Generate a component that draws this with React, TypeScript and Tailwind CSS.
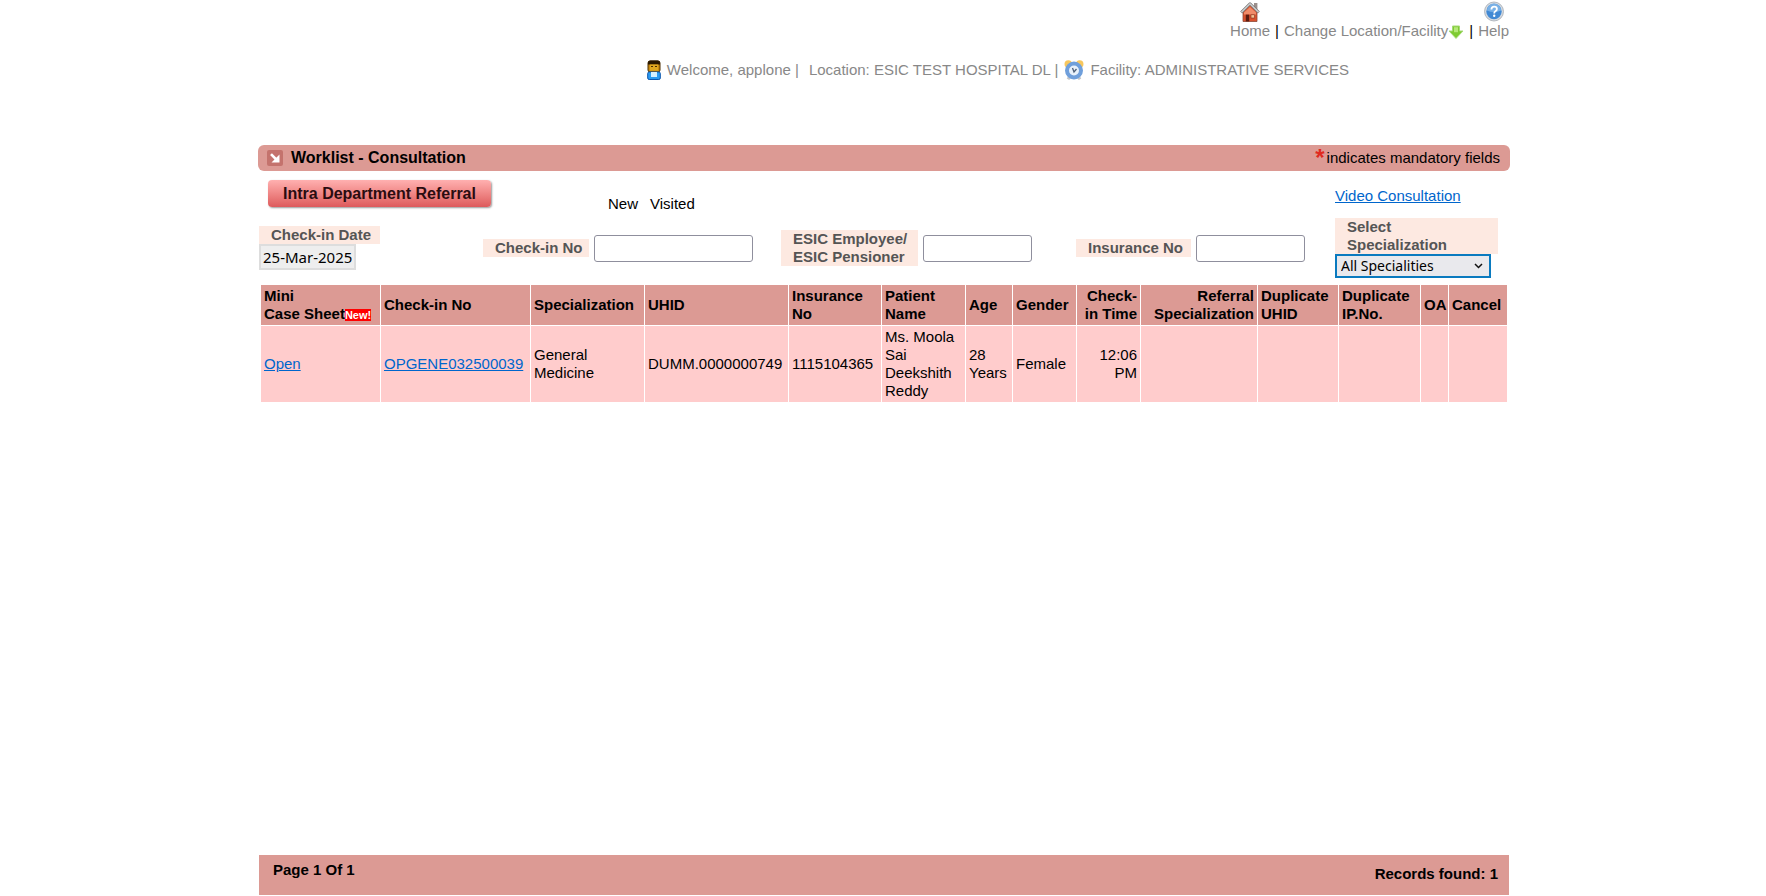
import React from "react";

const SANS = "font-['Liberation_Sans',Arial,sans-serif]";

function HomeIcon() {
  return (
    <svg width="20" height="20" viewBox="0 0 20 20" aria-hidden="true">
      <rect x="14" y="1" width="3.4" height="7" fill="#9a8f8c" />
      <path d="M3 9.500 10 3l7 6.500V19.500H3z" fill="#d9512c" stroke="#8d4a38" strokeWidth="0.8" />
      <path d="M4 10.500 10 5l6 5.500v2H4z" fill="#f08b68" />
      <rect x="5.800" y="12.600" width="3.400" height="6.800" fill="#5a1c10" />
      <rect x="11" y="12.800" width="3.600" height="3.200" fill="#f7c090" stroke="#7d3020" strokeWidth="0.600" />
      <path d="M1.200 10.600 10 1.800l8.800 8.800" fill="none" stroke="#777" strokeWidth="2.800" strokeLinejoin="round" />
      <path d="M1.400 10.200 10 1.800l8.600 8.400" fill="none" stroke="#cfcfcf" strokeWidth="1.400" strokeLinejoin="round" />
    </svg>
  );
}

function HelpIcon() {
  return (
    <svg width="20" height="21" viewBox="0 0 20 21" aria-hidden="true">
      <circle cx="10" cy="10.500" r="9.500" fill="#d5dae0" stroke="#a4abb4" strokeWidth="0.800" />
      <circle cx="10" cy="10.500" r="7.700" fill="#4189d4" />
      <path d="M3 9.500a7 7 0 0 1 14 0q-7 3-14 0z" fill="#78b0e6" />
      <path d="M7.400 8.500q.1-2.800 2.800-2.800t2.700 2.300q0 1.400-1.500 2.300-1.200.8-1.200 2.100" fill="none" stroke="#fff" strokeWidth="1.800" />
      <circle cx="10.200" cy="14.800" r="1.200" fill="#fff" />
    </svg>
  );
}

function DownArrowIcon() {
  return (
    <svg className="mt-0.5" width="16" height="14" viewBox="0 0 16 14" aria-hidden="true">
      <path d="M4.500 1h7v5H15l-7 7.400L1 6h3.500z" fill="#7fcb32" stroke="#a6d978" strokeWidth="1" strokeLinejoin="round" />
      <path d="M6 2.200h4v5H6z" fill="#b5e878" />
    </svg>
  );
}

function UserIcon() {
  return (
    <svg width="14" height="20" viewBox="0 0 14 20" aria-hidden="true">
      <rect x="1" y="1" width="12" height="11" rx="2" fill="#c98a10" stroke="#4a2d00" strokeWidth="1" />
      <path d="M1 4.500V2.500Q1 .5 3.500.5h7Q13 .5 13 2.500v2z" fill="#2a1800" />
      <rect x="3" y="4.500" width="8" height="6" fill="#e0a820" />
      <path d="M4 6.500h2M8 6.500h2" stroke="#4a2d00" strokeWidth="1" />
      <rect x="0.700" y="12" width="12.600" height="7.500" rx="1.500" fill="#2b9bf0" stroke="#0c56ad" strokeWidth="1" />
      <path d="M4 12h6v5H4z" fill="#d4efff" />
    </svg>
  );
}

function ClockIcon() {
  return (
    <svg width="20" height="20" viewBox="0 0 20 20" aria-hidden="true">
      <path d="M4 19.300 6 16M16 19.300 14 16" stroke="#c3c6ca" strokeWidth="3" />
      <circle cx="4.300" cy="4" r="3.800" fill="#f7c75e" />
      <circle cx="15.700" cy="4" r="3.800" fill="#f7c75e" />
      <circle cx="10" cy="10.500" r="7" fill="#e8f1fb" stroke="#6f9fdb" strokeWidth="4" />
      <path d="M8.500 8l1.500 4L12.500 9" fill="none" stroke="#4d5f78" strokeWidth="1.300" />
    </svg>
  );
}

function PanelIcon() {
  return (
    <svg width="16" height="16" viewBox="0 0 16 16" aria-hidden="true">
      <rect width="16" height="16" rx="2" fill="#c4736d" />
      <path d="M4 4.200 10.300 10.500" stroke="#fff" strokeWidth="2.600" />
      <path d="M12.500 4.500v8H4.500z" fill="#fff" />
    </svg>
  );
}

const LABEL = "bg-[#fde9e1] pl-3 font-bold leading-[18px] text-[#555]";
const FIELD = "rounded-[3px] border border-[#8f8f9d] bg-white px-1";

type Column = { title: React.ReactNode; width: string; value: React.ReactNode; right?: boolean };

const columns: Column[] = [
  {
    title: (
      <>
        Mini
        <br />
        Case Sheet
        <span className="bg-[#ff0000] text-[11px] leading-3 text-white">New!</span>
      </>
    ),
    width: "w-[119px]",
    value: <a href="#open" className="text-[#0066cc] underline">Open</a>,
  },
  {
    title: "Check-in No",
    width: "w-[149px]",
    value: <a href="#checkin" className="text-[#0066cc] underline">OPGENE032500039</a>,
  },
  { title: "Specialization", width: "w-[113px]", value: <>General<br />Medicine</> },
  { title: "UHID", width: "w-[143px]", value: "DUMM.0000000749" },
  { title: <>Insurance<br />No</>, width: "w-[92px]", value: "1115104365" },
  { title: <>Patient<br />Name</>, width: "w-[83px]", value: <>Ms. Moola<br />Sai<br />Deekshith<br />Reddy</> },
  { title: "Age", width: "w-[46px]", value: <>28<br />Years</> },
  { title: "Gender", width: "w-[63px]", value: "Female" },
  { title: <>Check-<br />in Time</>, width: "w-[63px]", value: <>12:06<br />PM</>, right: true },
  { title: <>Referral<br />Specialization</>, width: "w-[116px]", value: "", right: true },
  { title: <>Duplicate<br />UHID</>, width: "w-[80px]", value: "" },
  { title: <>Duplicate<br />IP.No.</>, width: "w-[81px]", value: "" },
  { title: "OA", width: "w-[27px]", value: "" },
  { title: "Cancel", width: "w-[58px]", value: "" },
];

export default function App() {
  return (
    <div className={`${SANS} mx-auto flex min-h-screen w-full max-w-[1254px] flex-col bg-white pb-px pl-0.5 text-[15px] leading-[18px] text-black`}>
      <header className="text-[#888]">
        <nav className="flex items-end justify-end gap-[5px] pt-px pr-px">
          <a href="#home" className="flex flex-col items-center">
            <HomeIcon />
            Home
          </a>
          <span className="text-black">|</span>
          <a href="#location" className="flex items-center">
            Change Location/Facility
            <DownArrowIcon />
          </a>
          <span className="text-black">|</span>
          <a href="#help" className="flex flex-col items-center">
            <HelpIcon />
            Help
          </a>
        </nav>
        <div className="flex items-center justify-center gap-1.5 pt-5 pl-[228px]">
          <UserIcon />
          <span>Welcome, applone |</span>
          <span className="pl-1">Location: ESIC TEST HOSPITAL DL |</span>
          <ClockIcon />
          <span>Facility: ADMINISTRATIVE SERVICES</span>
        </div>
      </header>

      <main>
        <div className="mt-[65px] flex h-[26px] items-center rounded-md bg-[#dc9a94] pr-[10px] pl-[9px]">
          <PanelIcon />
          <h1 className="ml-2 text-base font-bold">Worklist - Consultation</h1>
          <p className="ml-auto flex items-center gap-0.5">
            <span className="text-2xl leading-[18px] font-bold text-[#e02a20]">*</span>
            indicates mandatory fields
          </p>
        </div>

        <div className="grid grid-cols-[224fr_298fr_295fr_259fr_174fr] px-px">
          <div className="col-span-4 flex h-[47px] items-start pl-[9px]">
            <button
              type="button"
              className="mt-[9px] h-[27px] w-[223px] rounded bg-linear-to-b from-[#ffb0b0] to-[#dd5a5c] text-base leading-6 font-bold text-[#2a0c10] shadow-[1px_1px_2px_#999]"
            >
              Intra Department Referral
            </button>
            <p className="mt-6 ml-[117px] flex gap-3">
              <span>New</span>
              <span>Visited</span>
            </p>
          </div>
          <div className="pt-4">
            <a href="#video" className="text-[#0066cc] underline">Video Consultation</a>
          </div>

          <div className="flex flex-col items-start justify-center">
            <label htmlFor="date" className={`${LABEL} w-[121px]`}>Check-in Date</label>
            <input
              id="date"
              readOnly
              defaultValue="25-Mar-2025"
              className="h-[26px] w-[97px] border-2 border-[#ddd] bg-[#eee] px-0.5 font-['Noto_Sans',sans-serif]"
            />
          </div>
          <div className="flex items-center gap-[5px]">
            <label htmlFor="checkin" className={`${LABEL} w-[106px]`}>Check-in No</label>
            <input id="checkin" className={`${FIELD} h-[27px] w-[159px]`} />
          </div>
          <div className="flex items-center gap-[5px]">
            <label htmlFor="esic" className={`${LABEL} w-[137px]`}>
              ESIC Employee/
              <br />
              ESIC Pensioner
            </label>
            <input id="esic" className={`${FIELD} h-[27px] w-[109px]`} />
          </div>
          <div className="flex items-center gap-[5px]">
            <label htmlFor="insurance" className={`${LABEL} w-[115px]`}>Insurance No</label>
            <input id="insurance" className={`${FIELD} h-[27px] w-[109px]`} />
          </div>
          <div>
            <label htmlFor="spec" className={`${LABEL} block w-[163px]`}>
              Select
              <br />
              Specialization
            </label>
            <div className="relative w-[156px]">
              <select
                id="spec"
                className="block h-6 w-full appearance-none border-2 border-[#0a7abf] bg-[#e9e9ed] pl-1 font-['Noto_Sans',sans-serif] text-sm leading-5"
              >
                <option>All Specialities</option>
              </select>
              <svg className="pointer-events-none absolute top-2 right-2" width="9" height="8" viewBox="0 0 9 8" aria-hidden="true">
                <path d="M1 2l3.500 3.500L8 2" fill="none" stroke="#111" strokeWidth="1.500" />
              </svg>
            </div>
          </div>
        </div>

        <div className="px-0.5 pt-1.5">
          <table className="w-full table-fixed border-separate border-spacing-px text-left">
            <colgroup>
              {columns.map((c, i) => (
                <col key={i} className={c.width} />
              ))}
            </colgroup>
            <thead>
              <tr className="h-10 bg-[#dc9a94]">
                {columns.map((c, i) => (
                  <th key={i} className={`px-[3px] py-0.5 font-bold ${c.right ? "text-right" : ""}`}>{c.title}</th>
                ))}
              </tr>
            </thead>
            <tbody>
              <tr className="h-[76px] bg-[#ffcccc]">
                {columns.map((c, i) => (
                  <td key={i} className={`px-[3px] py-0.5 ${c.right ? "text-right" : ""}`}>{c.value}</td>
                ))}
              </tr>
            </tbody>
          </table>
        </div>
      </main>

      <footer className="mx-px mt-auto flex h-10 justify-between bg-[#dc9a94] pr-[11px] pl-[14px] font-bold">
        <span className="pt-1.5">Page 1 Of 1</span>
        <span className="pt-[10px]">Records found: 1</span>
      </footer>
    </div>
  );
}
